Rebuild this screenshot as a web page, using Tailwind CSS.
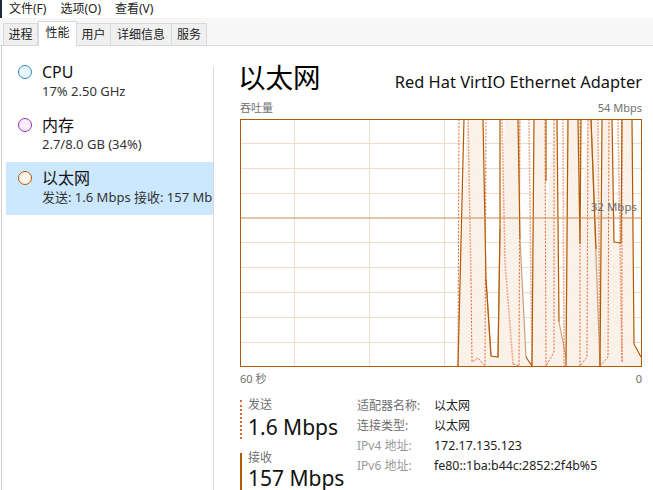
<!DOCTYPE html>
<html lang="zh-CN">
<head>
  <meta charset="UTF-8" />
  <title>任务管理器</title>
  <script src="https://cdn.jsdelivr.net/npm/@tailwindcss/browser@4"></script>
</head>
<body class="w-[653px] h-[490px] overflow-hidden bg-white text-black font-['Noto_Sans','Noto_Sans_CJK_SC',sans-serif]">

<!-- Menu -->
<nav class="h-[18px] flex items-center gap-[14px] pl-[7px] text-[12px] leading-[18px] text-[#222] border-l-2 border-[#1c2b3a]">
  <span>文件(F)</span>
  <span>选项(O)</span>
  <span>查看(V)</span>
</nav>

<!-- Tabs -->
<div class="h-[28px] pl-[3px] pt-[3px] flex items-end border-b border-[#d9d9d9] bg-[#f7f7f7] text-[12px] text-[#222]">
  <span class="h-[22px] w-[35px] flex items-center justify-center bg-[#f0f0f0] border border-b-0 border-[#d9d9d9]">进程</span>
  <span class="h-[25px] w-[39px] flex items-center justify-center bg-white border border-b-0 border-[#d9d9d9] -mb-px pb-[2px]">性能</span>
  <span class="h-[22px] w-[34px] flex items-center justify-center bg-[#f0f0f0] border border-l-0 border-b-0 border-[#d9d9d9]">用户</span>
  <span class="h-[22px] w-[61px] flex items-center justify-center bg-[#f0f0f0] border border-l-0 border-b-0 border-[#d9d9d9]">详细信息</span>
  <span class="h-[22px] w-[35px] flex items-center justify-center bg-[#f0f0f0] border border-l-0 border-b-0 border-[#d9d9d9]">服务</span>
</div>

<div class="flex h-[444px] border-l border-[#d0d0d0] ml-px">
  <!-- Sidebar -->
  <aside class="w-[211px] shrink-0 pl-[4px] pt-[14px] h-[424px]">
    <div class="h-[53px] flex pl-[12px] pt-[3px]">
      <span class="w-[14px] h-[14px] mt-[2px] shrink-0 rounded-full border border-[#2f8bc4] bg-[#eaf5fc]"></span>
      <div class="ml-[10px]">
        <div class="text-[16px] leading-[19px] text-[#111]">CPU</div>
        <div class="text-[13px] leading-[18px] text-[#333]">17% 2.50 GHz</div>
      </div>
    </div>
    <div class="h-[49px] flex pl-[12px] pt-[3px]">
      <span class="w-[14px] h-[14px] mt-[2px] shrink-0 rounded-full border border-[#9b30b5] bg-[#f8eefb]"></span>
      <div class="ml-[10px]">
        <div class="text-[16px] leading-[19px] text-[#111]">内存</div>
        <div class="text-[13px] leading-[18px] text-[#333]">2.7/8.0 GB (34%)</div>
      </div>
    </div>
    <div class="h-[53px] flex pl-[12px] pt-[7px] bg-[#cce8ff]">
      <span class="w-[14px] h-[14px] mt-[2px] shrink-0 rounded-full border border-[#b35a00] bg-[#fdf4ec]"></span>
      <div class="ml-[10px] whitespace-nowrap">
        <div class="text-[16px] leading-[19px] text-[#111]">以太网</div>
        <div class="text-[13px] leading-[18px] text-[#333]">发送: 1.6 Mbps 接收: 157 Mb</div>
      </div>
    </div>
  </aside>

  <!-- Detail -->
  <main class="flex-1 mt-[21px] border-l border-[#d9d9d9] pl-[26px] pr-[12px]">
    <div class="flex items-end justify-between h-[32px] -mt-[5px]">
      <h1 class="text-[27.5px] leading-[32px] font-normal -ml-[2px]">以太网</h1>
      <span class="text-[16.4px] leading-[20px] mb-[2px] text-[#111]">Red Hat VirtIO Ethernet Adapter</span>
    </div>
    <div class="flex justify-between text-[11px] leading-[14px] text-[#707070] mt-[7px]">
      <span>吞吐量</span><span>54 Mbps</span>
    </div>
    <div class="relative w-[402px] h-[249px] mt-[3px]">
      <svg class="block" width="402" height="249" viewBox="240 119 402 249" fill="none">
        <g stroke="#eedccb" stroke-width="1">
          <path d="M294.5 120V367M369.5 120V367M444.5 120V367M519.5 120V367M594.5 120V367"/>
          <path d="M240 144.5H641M240 169.5H641M240 194.5H641M240 243.5H641M240 268.5H641M240 293.5H641M240 318.5H641M240 343.5H641"/>
        </g>
        <path fill="#faf0e6" fill-opacity="0.9" d="M458 367L461 230L468 120H483L486 280L491 357L498 358L500 230L505 120H518L520 240L526 358L532 367L534 120H545L546 230L554 120H557L559 323L564 350L566 120H578L580 245L588 120H598L600 260L602 120H612L614 243L621 244L622 120H632L634 345L641 358V367Z"/>
        <path stroke="#c9a27c" stroke-width="1.2" d="M486 280L491 357M498 358L500 230M520 240L526 358M559 323L566 358M591 120L600 367"/>
        <path stroke="#e8683a" stroke-opacity="0.55" stroke-width="1.5" stroke-dasharray="2 1" d="M468 120L471 280M502 120L505 263L513 365M529 120L532 367M563 120L564 367M598 120L600 367M618 120L622 363"/>
        <path stroke="#e8683a" stroke-width="1" stroke-dasharray="2 1.5" d="M458 367L459 120M471 280L472 363L478 359L485 367L486 120M513 365L519 367L520 120M545 120L546 367L554 353L554 120M580 120V367L587 358L588 120M600 367L608 358L609 120M622 363L622 120"/>
        <path stroke="#b35a00" stroke-width="1.2" d="M458 367L464 120M483 120L486 280L491 357L498 358L500 230L500 120M518 120L520 240M526 358L532 367L534 120M546 120V182M557 120L559 323M566 358V367L568 120M578 120L580 245L581 120M591 120L596 250M600 367L602 120M612 120L614 243L621 244L622 120M632 120L634 345M634 345L641 358"/>
        <path stroke="#c98a55" stroke-width="1" d="M240 219H641"/>
        <rect x="240.5" y="120.5" width="401" height="247" stroke="#b35a00"/>
      </svg>
      <span class="absolute right-[5px] top-[82px] text-[11.5px] leading-[14px] text-[#707070]">32 Mbps</span>
    </div>
    <div class="flex justify-between text-[11px] leading-[14px] text-[#707070] mt-[5px]">
      <span>60 秒</span><span>0</span>
    </div>

    <!-- Stats -->
    <div class="flex mt-[14px]">
      <div class="w-[117px] shrink-0">
        <div class="border-l-2 border-dotted border-[#e0693a] pl-[6px] h-[39px]">
          <div class="text-[12px] leading-[10px] text-[#707070]">发送</div>
          <div class="text-[21px] leading-[28px] mt-[3px] text-[#111] whitespace-nowrap">1.6 Mbps</div>
        </div>
        <div class="border-l-2 border-[#b35a00] pl-[6px] h-[42px] mt-[14px]">
          <div class="text-[12px] leading-[10px] text-[#707070]">接收</div>
          <div class="text-[21px] leading-[20px] mt-[5px] text-[#111] whitespace-nowrap">157 Mbps</div>
        </div>
      </div>
      <dl class="grid grid-cols-[77px_1fr] text-[12px] leading-[20px] -mt-[4px] h-fit whitespace-nowrap">
        <dt class="text-[#707070]">适配器名称:</dt><dd class="text-[#222]">以太网</dd>
        <dt class="text-[#707070]">连接类型:</dt><dd class="text-[#222]">以太网</dd>
        <dt class="text-[#9a9a9a]">IPv4 地址:</dt><dd class="text-[#222] text-[12.4px]">172.17.135.123</dd>
        <dt class="text-[#9a9a9a]">IPv6 地址:</dt><dd class="text-[#222] text-[12.4px]">fe80::1ba:b44c:2852:2f4b%5</dd>
      </dl>
    </div>
  </main>
</div>
</body>
</html>
